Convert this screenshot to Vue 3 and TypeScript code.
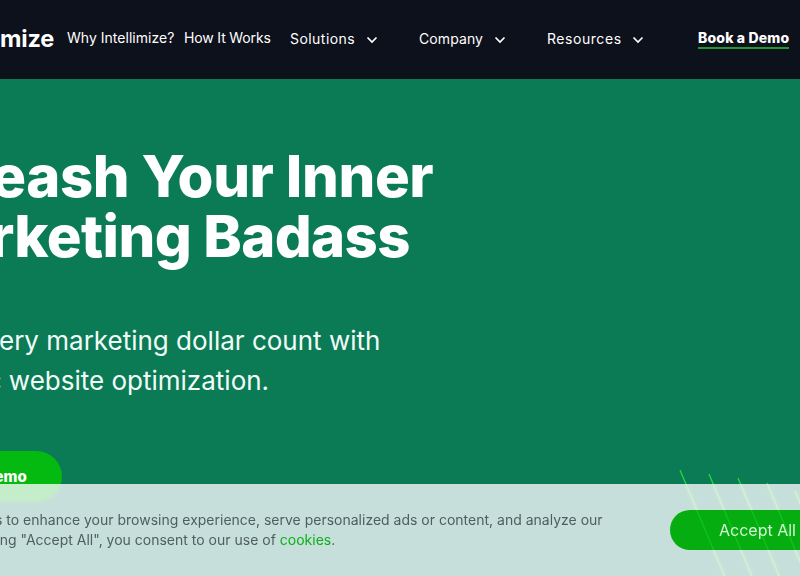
<script setup lang="ts">
interface NavItem { label: string; chevron: boolean; cls: string }
const items: NavItem[] = [
  { label: 'Why Intellimize?', chevron: false, cls: 'why' },
  { label: 'How It Works', chevron: false, cls: 'how' },
  { label: 'Solutions', chevron: true, cls: 'sol' },
  { label: 'Company', chevron: true, cls: 'com' },
  { label: 'Resources', chevron: true, cls: 'res' },
]
const starts: [number, number][] = [
  [680, 470],
  [709, 474],
  [738, 478],
  [767, 483],
  [795, 491],
]
const rays = starts.map(([x, y]) => ({ x1: x, y1: y, x2: x + (576 - y) * 0.42, y2: 576 }))
</script>

<template>
  <div class="page">
    <header class="header">
      <span class="logo">mize</span>
      <nav class="nav">
        <a v-for="item in items" :key="item.label" class="nav-item" :class="item.cls">
          <span>{{ item.label }}</span>
          <svg v-if="item.chevron" class="chev" width="12" height="8" viewBox="0 0 12 8">
            <path d="M1.5 1.5 L6 6 L10.5 1.5" fill="none" stroke="#fff" stroke-width="1.7" />
          </svg>
        </a>
      </nav>
      <a class="book">Book a Demo</a>
    </header>

    <main class="hero">
      <svg class="rays" width="800" height="497" viewBox="0 79 800 497">
        <line v-for="(r, i) in rays" :key="i" :x1="r.x1" :y1="r.y1" :x2="r.x2" :y2="r.y2" stroke="#1fdc3a" stroke-width="1.3" />
      </svg>
      <div class="copy">
        <h1><span class="l1">Unleash Your Inner</span><span class="l2">Marketing Badass</span></h1>
        <p>Make every marketing dollar count with<br /><span class="p2">dynamic website optimization.</span></p>
        <a class="cta">Book a Demo</a>
      </div>
    </main>

    <aside class="cookie">
      <svg class="rays" width="800" height="92" viewBox="0 484 800 92">
        <line v-for="(r, i) in rays" :key="i" :x1="r.x1" :y1="r.y1" :x2="r.x2" :y2="r.y2" stroke="#d6f0da" stroke-width="1.2" />
      </svg>
      <p>We use cookies to enhance your browsing experience, serve personalized ads or content, and analyze our<br />traffic. By clicking "Accept All", you consent to our use of <a class="link">cookies</a>.</p>
      <button class="accept">
        <svg class="rays" width="190" height="40" viewBox="670 510 190 40">
          <line v-for="(r, i) in rays" :key="i" :x1="r.x1" :y1="r.y1" :x2="r.x2" :y2="r.y2" stroke="#12c522" stroke-width="1.2" />
        </svg>
        <span class="accept-label">Accept All</span>
      </button>
    </aside>
  </div>
</template>

<style scoped>
.page {
  position: relative;
  width: 800px;
  height: 576px;
  overflow: hidden;
  font-family: Inter, "Liberation Sans", sans-serif;
  background: #0b7b56;
}
.header {
  display: flex;
  align-items: center;
  height: 79px;
  background: #0d111b;
  color: #fff;
  white-space: nowrap;
}
.logo {
  margin-top: -3px;
  width: 67px;
  font-size: 23.5px;
  font-weight: 700;
  letter-spacing: -0.2px;
}
.nav { display: flex; align-items: center; }
.nav-item {
  display: flex;
  align-items: center;
  font-size: 14px;
  font-weight: 400;
  color: #fff;
}
.why { width: 117px; margin-top: -4px; letter-spacing: 0.02px; }
.how { width: 106px; margin-top: -4px; letter-spacing: -0.15px; }
.sol { width: 129px; margin-top: -3px; letter-spacing: 0.45px; }
.com { width: 128px; margin-top: -3px; letter-spacing: 0.1px; }
.res { width: 151px; margin-top: -3px; letter-spacing: 0.55px; }
.sol span { width: 76px; }
.com span { width: 75px; }
.res span { width: 85px; }
.chev { margin-top: 3px; }
.book {
  margin-top: -1px;
  font-size: 14px;
  font-weight: 800;
  letter-spacing: 0.17px;
  padding-bottom: 1px;
  border-bottom: 2px solid #1f9a2e;
}
.hero {
  position: relative;
  height: 497px;
  overflow: hidden;
}
.rays { position: absolute; left: 0; top: 0; pointer-events: none; }
.copy {
  position: relative;
  margin-left: -96px;
  padding-top: 67px;
  color: #fff;
  white-space: nowrap;
}
h1 {
  margin: 0;
  font-size: 58px;
  line-height: 60px;
  font-weight: 800;
}
.l1 { display: block; margin-left: -7px; letter-spacing: -0.4px; }
.l2 { display: block; margin-left: -2px; letter-spacing: -0.6px; }
.copy p {
  margin: 55px 0 0 -8px;
  font-size: 26px;
  line-height: 40px;
  font-weight: 400;
  color: #f2fbf7;
}
.p2 { display: inline-block; margin-left: 1px; }
.cta {
  display: flex;
  align-items: center;
  justify-content: center;
  width: 166px;
  height: 51px;
  margin-top: 50px;
  margin-left: -8px;
  border-radius: 26px;
  background: #04b90f;
  font-size: 15px;
  font-weight: 800;
  letter-spacing: -0.05px;
}
.cookie {
  position: absolute;
  left: 0;
  right: 0;
  bottom: 0;
  height: 92px;
  display: flex;
  align-items: flex-start;
  background: rgba(253, 251, 255, 0.78);
  backdrop-filter: blur(1.5px);
  white-space: nowrap;
}
.cookie p {
  position: relative;
  flex: none;
  width: 670px;
  margin: 26px 0 0 -102px;
  color: #4d5f60;
  font-size: 14px;
  line-height: 20px;
}
.link { color: #0cb01c; }
.accept {
  position: relative;
  flex: none;
  width: 190px;
  height: 40px;
  margin: 26px 0 0 102px;
  padding: 0 0 0 49px;
  border: 0;
  border-radius: 20px;
  overflow: hidden;
  background: #05ad11;
  color: #d4f5d4;
  font-family: inherit;
  font-size: 16px;
  text-align: left;
}
.accept-label { position: relative; }
</style>
